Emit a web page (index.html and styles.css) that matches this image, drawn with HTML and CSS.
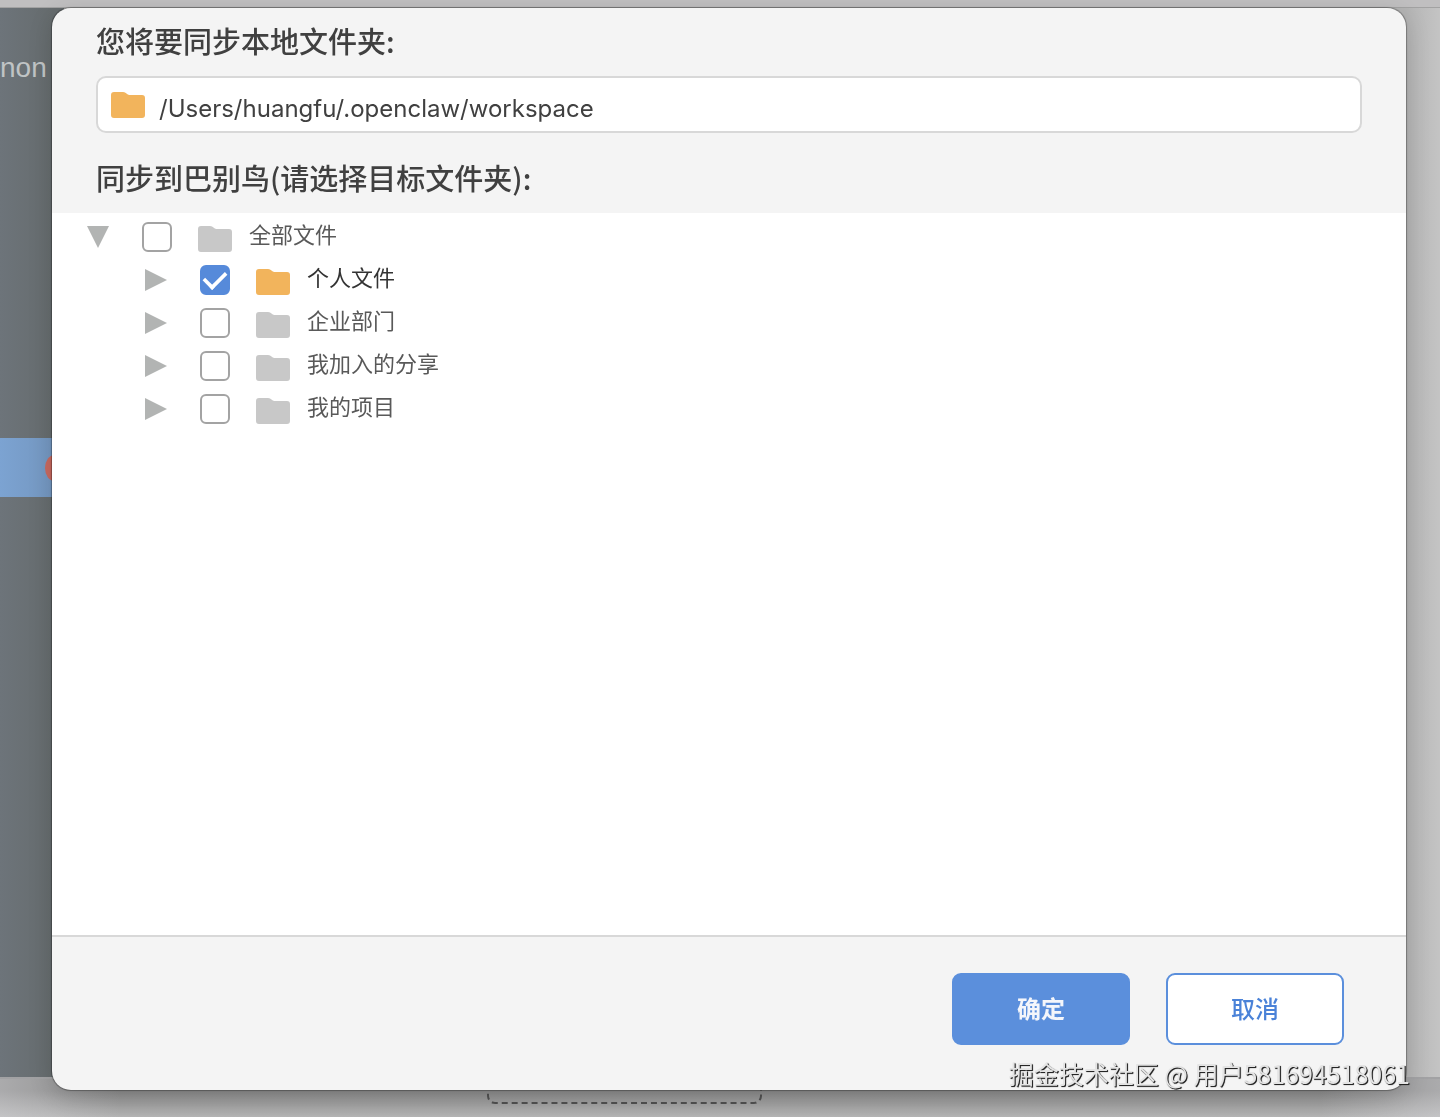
FILE: index.html
```html
<!DOCTYPE html>
<html lang="zh-CN">
<head>
    <meta charset="UTF-8">
    <meta name="viewport" content="width=device-width, initial-scale=1.0">
    <title>选择同步文件夹</title>
    <link rel="stylesheet" href="styles.css">
</head>
<body>
    <svg class="sprite" aria-hidden="true">
        <symbol id="folder" viewBox="0 0 34 28">
            <path d="M0 4a3 3 0 0 1 3-3h9c2 0 3 1 4 2l2 1h13a3 3 0 0 1 3 3v17a3 3 0 0 1-3 3H3a3 3 0 0 1-3-3z"/>
        </symbol>
        <symbol id="arrow" viewBox="0 0 22 22">
            <path d="M0 0l22 11L0 22z"/>
        </symbol>
    </svg>

    <!-- Ventana de fondo -->
    <div class="app">
        <div class="app-body">
            <div class="sidebar">
                <div class="sidebar-head">non</div>
                <div class="sidebar-item"><span class="dot"></span></div>
            </div>
            <div class="content"></div>
        </div>
        <div class="desktop">
            <div class="dropzone"></div>
        </div>
    </div>

    <div class="overlay">
        <form class="modal" role="dialog" aria-label="选择同步文件夹">
            <div class="modal-header">
                <label class="title" for="ruta">您将要同步本地文件夹:</label>
                <div class="path-box">
                    <svg class="folder active"><use href="#folder"/></svg>
                    <input type="text" id="ruta" class="path" value="/Users/huangfu/.openclaw/workspace" readonly>
                </div>
                <h2 class="title">同步到巴别鸟(请选择目标文件夹):</h2>
            </div>

            <ul class="tree">
                <li>
                    <div class="row">
                        <button type="button" class="toggle open" aria-label="收起"><svg><use href="#arrow"/></svg></button>
                        <input type="checkbox" id="todos">
                        <svg class="folder"><use href="#folder"/></svg>
                        <label for="todos">全部文件</label>
                    </div>
                    <ul>
                        <li class="row">
                            <button type="button" class="toggle" aria-label="展开"><svg><use href="#arrow"/></svg></button>
                            <input type="checkbox" id="personal" checked>
                            <svg class="folder active"><use href="#folder"/></svg>
                            <label for="personal" class="selected">个人文件</label>
                        </li>
                        <li class="row">
                            <button type="button" class="toggle" aria-label="展开"><svg><use href="#arrow"/></svg></button>
                            <input type="checkbox" id="empresa">
                            <svg class="folder"><use href="#folder"/></svg>
                            <label for="empresa">企业部门</label>
                        </li>
                        <li class="row">
                            <button type="button" class="toggle" aria-label="展开"><svg><use href="#arrow"/></svg></button>
                            <input type="checkbox" id="compartido">
                            <svg class="folder"><use href="#folder"/></svg>
                            <label for="compartido">我加入的分享</label>
                        </li>
                        <li class="row">
                            <button type="button" class="toggle" aria-label="展开"><svg><use href="#arrow"/></svg></button>
                            <input type="checkbox" id="proyectos">
                            <svg class="folder"><use href="#folder"/></svg>
                            <label for="proyectos">我的项目</label>
                        </li>
                    </ul>
                </li>
            </ul>

            <div class="modal-footer">
                <button type="button" class="btn btn-ok">确定</button>
                <button type="button" class="btn btn-cancel">取消</button>
            </div>
        </form>
    </div>

    <div class="watermark">掘金技术社区 @ 用户581694518061</div>
</body>
</html>
```

FILE: styles.css
```css
* {
    margin: 0;
    padding: 0;
    box-sizing: border-box;
}

body {
    font-family: 'Noto Sans CJK SC', sans-serif;
    color: #404040;
    height: 100vh;
    overflow: hidden;
}

ul {
    list-style: none;
}

.sprite {
    display: none;
}

/* Fondo */
.app {
    display: flex;
    flex-direction: column;
    height: 100vh;
    padding-top: 7px;
    background: #c0bfc0;
}

.app-body {
    flex: 1;
    display: flex;
    border-top: 1px solid #a2a2a2;
    border-bottom: 2px solid #a2a2a4;
}

.sidebar {
    width: 64px;
    background: linear-gradient(90deg, #6d747a, #666c6e 52px);
}

.sidebar-head {
    height: 430px;
    padding-top: 40px;
    font-family: 'Liberation Sans', sans-serif;
    font-size: 28px;
    line-height: 40px;
    color: #c0c4c5;
}

.sidebar-item {
    display: flex;
    align-items: center;
    height: 59px;
    padding-left: 45px;
    background: linear-gradient(90deg, #7ca3d2, #7497c0 52px);
}

.dot {
    width: 26px;
    height: 26px;
    border-radius: 50%;
    background: #c9695f;
}

.content {
    flex: 1;
    background: linear-gradient(90deg, #b4b4b4 calc(100% - 34px), #c4c4c4);
}

.desktop {
    height: 38px;
    padding-left: 487px;
    background:
        linear-gradient(90deg, rgba(220, 220, 224, 0.4), transparent 120px, transparent calc(100% - 120px), rgba(220, 220, 224, 0.4)),
        linear-gradient(#8a8a8a 12px, #b4b4b4);
}

.dropzone {
    width: 275px;
    height: 25px;
    border: 2px dashed #505050;
    border-top: none;
    border-radius: 0 0 8px 8px;
}

/* Ventana modal */
.overlay {
    position: fixed;
    inset: 0;
    display: flex;
    padding: 8px 34px 27px 52px;
}

.modal {
    flex: 1;
    display: flex;
    flex-direction: column;
    border-radius: 19px;
    overflow: hidden;
    background: #f4f4f4;
    box-shadow: 0 0 1px 1px rgba(0, 0, 0, 0.3), 0 6px 24px rgba(0, 0, 0, 0.15);
}

.modal-header {
    padding: 10px 44px 14px;
}

.title {
    display: block;
    font-size: 29px;
    font-weight: 500;
    line-height: 44px;
}

.path-box {
    display: flex;
    align-items: center;
    gap: 14px;
    height: 57px;
    margin: 14px 0 22px;
    padding: 0 13px;
    border: 2px solid #d8d8d8;
    border-radius: 10px;
    background: #fff;
}

.path {
    flex: 1;
    border: none;
    outline: none;
    background: none;
    font-family: Inter, sans-serif;
    font-size: 24px;
    line-height: 40px;
    padding-top: 8px;
    color: #404040;
}

.folder {
    flex: none;
    width: 34px;
    height: 28px;
    fill: #c8c8c8;
}

.folder.active {
    fill: #f2b45c;
}

/* Árbol de carpetas */
.tree {
    flex: 1;
    padding: 2px 33px;
    background: #fff;
    border-bottom: 2px solid #d8d8d8;
}

.tree ul {
    padding-left: 58px;
}

.row {
    display: flex;
    align-items: center;
    height: 43px;
}

.row label {
    margin-left: 17px;
    font-size: 22px;
    line-height: 32px;
    padding-bottom: 8px;
    color: #595959;
}

.row label.selected {
    color: #333;
}

.row .folder {
    margin-top: 4px;
}

.toggle {
    width: 24px;
    height: 22px;
    border: none;
    background: none;
    cursor: pointer;
}

.toggle svg {
    display: block;
    width: 22px;
    height: 22px;
    margin-left: 2px;
    fill: #b2b4b3;
}

.toggle.open svg {
    transform: rotate(90deg);
}

.row input {
    appearance: none;
    display: grid;
    place-items: center;
    width: 30px;
    height: 30px;
    margin: 0 26px 0 33px;
    border: 2px solid #a3a3a3;
    border-radius: 6px;
    background: #fff;
}

.row input:checked {
    border-color: #568ada;
    background: #568ada;
}

.row input:checked::before {
    content: "";
    width: 20px;
    height: 11px;
    margin-bottom: 5px;
    border-left: 4px solid #fff;
    border-bottom: 4px solid #fff;
    transform: rotate(-45deg) scale(0.9);
}

/* Botones */
.modal-footer {
    display: flex;
    justify-content: flex-end;
    gap: 36px;
    padding: 36px 62px 45px;
}

.btn {
    width: 178px;
    height: 72px;
    padding-bottom: 4px;
    border: 2px solid #5b8fdc;
    border-radius: 9px;
    font-family: inherit;
    font-size: 24px;
    cursor: pointer;
}

.btn-ok {
    background: #5b8fdc;
    color: #f4f6fb;
    font-weight: bold;
}

.btn-cancel {
    background: #fff;
    color: #4a82d8;
    font-weight: 500;
}

.watermark {
    position: fixed;
    right: 30px;
    bottom: 26px;
    font-size: 25px;
    line-height: 36px;
    color: #e4e4e4;
    text-shadow: 1px 1px 1px #222, 1px 1px 0 #444;
}
```
